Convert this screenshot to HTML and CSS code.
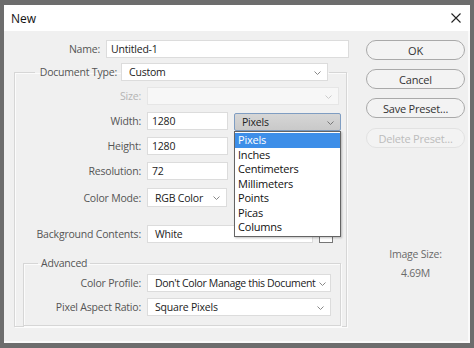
FILE: index.html
```html
<!DOCTYPE html>
<html lang="en">
<head>
    <meta charset="UTF-8">
    <title>New</title>
    <link rel="stylesheet" href="styles.css">
</head>
<body>
    <div class="dialog">
        <div class="titlebar">
            <span class="title">New</span>
            <svg class="close" width="10" height="10" viewBox="0 0 10 10"><path d="M0.5 0.5 L9.5 9.5 M9.5 0.5 L0.5 9.5" stroke="#222" stroke-width="1.1" fill="none"/></svg>
        </div>
        <div class="content">
            <div class="form">
                <div class="row name-row">
                    <span class="lbl name-lbl">Name:</span>
                    <div class="field name-field">Untitled-1</div>
                </div>

                <fieldset class="group doc-group">
                    <legend class="doc-legend">
                        <span class="lbl doc-lbl">Document Type:</span>
                        <div class="field select doc-select">Custom <svg class="chev" width="7" height="4" viewBox="0 0 7 4"><path d="M0.5 0.5 L3.5 3.5 L6.5 0.5" stroke="#888" fill="none"/></svg></div>
                    </legend>

                    <div class="row first">
                        <span class="lbl off">Size:</span>
                        <div class="field select size-field off"><svg class="chev" width="7" height="4" viewBox="0 0 7 4"><path d="M0.5 0.5 L3.5 3.5 L6.5 0.5" stroke="#ccc" fill="none"/></svg></div>
                    </div>
                    <div class="row">
                        <span class="lbl">Width:</span>
                        <div class="field num">1280</div>
                        <div class="units">
                            <div class="units-box">Pixels <svg class="chev" width="7" height="4" viewBox="0 0 7 4"><path d="M0.5 0.5 L3.5 3.5 L6.5 0.5" stroke="#777" fill="none"/></svg></div>
                            <ul class="menu">
                                <li class="active">Pixels</li>
                                <li>Inches</li>
                                <li>Centimeters</li>
                                <li>Millimeters</li>
                                <li>Points</li>
                                <li>Picas</li>
                                <li>Columns</li>
                            </ul>
                        </div>
                    </div>
                    <div class="row">
                        <span class="lbl">Height:</span>
                        <div class="field num">1280</div>
                    </div>
                    <div class="row">
                        <span class="lbl">Resolution:</span>
                        <div class="field num">72</div>
                    </div>
                    <div class="row mode-row">
                        <span class="lbl">Color Mode:</span>
                        <div class="field select mode-field">RGB Color <svg class="chev" width="7" height="4" viewBox="0 0 7 4"><path d="M0.5 0.5 L3.5 3.5 L6.5 0.5" stroke="#888" fill="none"/></svg></div>
                    </div>
                    <div class="row bg-row">
                        <span class="lbl">Background Contents:</span>
                        <div class="field select bg-field">White</div>
                        <div class="swatch"></div>
                    </div>

                    <fieldset class="group adv-group">
                        <legend class="adv-legend">Advanced</legend>
                        <div class="row adv-row">
                            <span class="lbl adv-lbl">Color Profile:</span>
                            <div class="field select adv-field tight">Don't Color Manage this Document <svg class="chev" width="7" height="4" viewBox="0 0 7 4"><path d="M0.5 0.5 L3.5 3.5 L6.5 0.5" stroke="#888" fill="none"/></svg></div>
                        </div>
                        <div class="row adv-row">
                            <span class="lbl adv-lbl">Pixel Aspect Ratio:</span>
                            <div class="field select adv-field">Square Pixels <svg class="chev" width="7" height="4" viewBox="0 0 7 4"><path d="M0.5 0.5 L3.5 3.5 L6.5 0.5" stroke="#888" fill="none"/></svg></div>
                        </div>
                    </fieldset>
                </fieldset>
            </div>

            <div class="side">
                <button class="btn">OK</button>
                <button class="btn">Cancel</button>
                <button class="btn">Save Preset...</button>
                <button class="btn off-btn">Delete Preset...</button>
                <div class="size-info">
                    <p>Image Size:</p>
                    <p>4.69M</p>
                </div>
            </div>
        </div>
    </div>
</body>
</html>
```

FILE: styles.css
```css
* {
    margin: 0;
    padding: 0;
    box-sizing: border-box;
}
body {
    background: #6d6d6d;
    font-family: 'Open Sans', 'Noto Sans', sans-serif;
    font-size: 10.5px;
    letter-spacing: -0.2px;
    color: #222;
}
.dialog {
    margin: 5px 0 0 4px;
    width: 466px;
    height: 338px;
    background: #f0f0f0;
    box-shadow: inset -2px -2px 0 #fafafa;
}
.titlebar {
    height: 26px;
    background: #fff;
    display: flex;
    align-items: center;
    justify-content: space-between;
    padding: 0 9px 0 7px;
}
.title {
    font-size: 12px;
    letter-spacing: 0;
    color: #111;
}
.close {
    display: block;
    margin-top: -1px;
}
.content {
    display: flex;
    padding: 9px 0 0 10px;
}
.form {
    width: 338px;
}
.row {
    display: flex;
    align-items: center;
    height: 18px;
    margin-top: 7px;
}
.lbl {
    color: #555;
    text-align: right;
    white-space: nowrap;
}
.off {
    color: #b4b4b4;
}
.field {
    height: 18px;
    background: #fff;
    border: 1px solid #dcdcdc;
    display: flex;
    align-items: center;
    padding-left: 4px;
    position: relative;
    white-space: nowrap;
    overflow: hidden;
}
.select {
    padding-left: 7px;
    padding-right: 14px;
}
.tight {
    letter-spacing: -0.35px;
}
.chev {
    position: absolute;
    right: 6px;
    top: 7px;
}
.tight .chev {
    right: 4px;
}
.name-row {
    margin-top: 0;
}
.name-lbl {
    width: 86px;
}
.name-field {
    margin-left: 4px;
    width: 243px;
}

/* group boxes */
.group {
    border: 1px solid #d6d6d6;
    box-shadow: inset 1px 1px 0 #fbfbfb, 1px 1px 0 #fbfbfb;
}
.doc-group {
    margin-top: 5px;
    width: 333px;
    height: 264px;
    padding: 0;
}
.doc-legend {
    display: flex;
    align-items: center;
    margin-left: 20px;
    padding-right: 1px;
}
.doc-lbl {
    width: 82px;
}
.doc-select {
    margin-left: 4px;
    width: 207px;
}
.doc-group > .row .lbl {
    width: 126px;
}
.row .field:nth-child(2) {
    margin-left: 6px;
}
.row.first {
    margin-top: 6px;
}
.size-field {
    width: 192px;
    border-color: #e6e6e6;
    background: #f7f7f7;
}
.num {
    width: 81px;
}
.units {
    position: relative;
    margin-left: 6px;
    align-self: flex-start;
    margin-top: 1px;
}
.units-box {
    width: 107px;
    height: 18px;
    background: linear-gradient(#d6d6d6, #c9c9c9);
    border: 1px solid #7f9dc2;
    border-radius: 2px;
    padding-left: 7px;
    display: flex;
    align-items: center;
    position: relative;
}
.menu {
    list-style: none;
    position: absolute;
    top: 18px;
    left: 0;
    width: 107px;
    background: #fff;
    border: 1px solid #646464;
    padding: 1px 0 1px;
    z-index: 5;
    box-shadow: 1px 1px 2px rgba(0, 0, 0, 0.25);
    font-size: 11px;
}
.menu li {
    height: 14.5px;
    line-height: 14px;
    padding-left: 3px;
    color: #111;
}
.menu li.active {
    background: #3d8ee8;
    color: #fff;
}
.mode-row {
    margin-top: 8px;
    height: 19px;
}
.mode-field {
    width: 80px;
    height: 19px;
}
.bg-row {
    margin-top: 18px;
}
.bg-field {
    width: 166px;
}
.swatch {
    width: 14px;
    height: 13px;
    margin-left: 6px;
    margin-top: 4px;
    border: 1px solid #777;
    background: #fff;
}

.adv-group {
    margin: 13px 0 0 8px;
    width: 318px;
    height: 70px;
    padding: 0;
}
.adv-legend {
    margin-left: 14px;
    padding: 0 3px;
    color: #555;
}
.adv-row {
    margin-top: 4px;
}
.adv-row + .adv-row {
    margin-top: 6px;
}
.adv-lbl {
    width: 117px;
}
.adv-field {
    width: 184px;
}

/* right side */
.side {
    margin-left: 14px;
    width: 99px;
    display: flex;
    flex-direction: column;
}
.btn {
    height: 20px;
    font-family: inherit;
    font-size: 11px;
    letter-spacing: -0.2px;
    color: #333;
    background: #f3f3f3;
    border: 1px solid #a9a9a9;
    border-radius: 10px;
    margin-bottom: 9px;
}
.off-btn {
    margin-top: 1px;
    color: #bcbcbc;
    border-color: #e2e2e2;
}
.size-info {
    margin-top: 88px;
    text-align: center;
    color: #6a6a6a;
    line-height: 19px;
}
```
